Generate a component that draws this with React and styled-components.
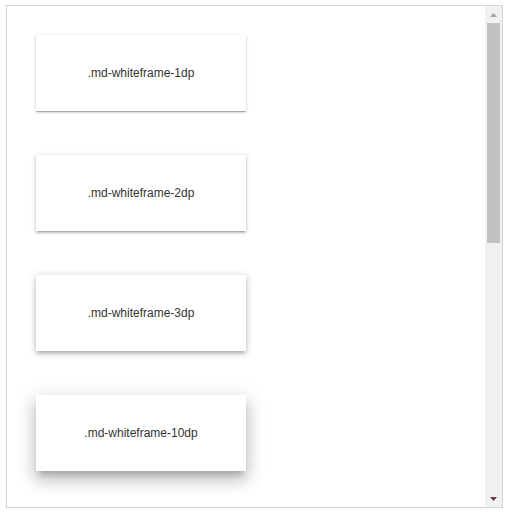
import React from 'react';
import styled, { createGlobalStyle } from 'styled-components';

const GlobalStyle = createGlobalStyle`
  html, body {
    margin: 0;
    padding: 0;
    background: #fff;
    font-family: "Liberation Sans", Arial, sans-serif;
  }
`;

const Frame = styled.div`
  box-sizing: border-box;
  margin: 5px 0 0 6px;
  width: 497px;
  height: 503px;
  border: 1px solid #d4d4d4;
  display: flex;
  overflow: hidden;
`;

const Content = styled.div`
  flex: 1;
  overflow: hidden;
  padding: 29px 0 0 29px;
  display: flex;
  flex-direction: column;
  gap: 44px;
`;

const Card = styled.div`
  flex: none;
  width: 210px;
  height: 76px;
  background: #fff;
  display: flex;
  align-items: center;
  justify-content: center;
  font-size: 12px;
  color: #333;
  box-shadow: ${(p) => p.shadow};
`;

const Scrollbar = styled.div`
  width: 17px;
  flex: none;
  background: #f1f1f1;
  display: flex;
  flex-direction: column;
`;

const ArrowButton = styled.div`
  height: 17px;
  flex: none;
  display: flex;
  align-items: center;
  justify-content: center;
`;

const Track = styled.div`
  flex: 1;
  padding: 0 2px;
`;

const Thumb = styled.div`
  height: 220px;
  background: #c1c1c1;
`;

const shadows = {
  1: '0 1px 3px 0 rgba(0,0,0,.2), 0 1px 1px 0 rgba(0,0,0,.14), 0 2px 1px -1px rgba(0,0,0,.12)',
  2: '0 1px 5px 0 rgba(0,0,0,.2), 0 2px 2px 0 rgba(0,0,0,.14), 0 3px 1px -2px rgba(0,0,0,.12)',
  3: '0 1px 8px 0 rgba(0,0,0,.2), 0 3px 4px 0 rgba(0,0,0,.14), 0 3px 3px -2px rgba(0,0,0,.12)',
  10: '0 6px 6px -3px rgba(0,0,0,.2), 0 10px 14px 1px rgba(0,0,0,.14), 0 4px 18px 3px rgba(0,0,0,.12)',
};

// only the frames that are visible in the scrolled view
const levels = [1, 2, 3, 10];

function Arrow({ up, color }) {
  return (
    <svg width="7" height="4" viewBox="0 0 7 4">
      {up ? (
        <polygon points="3.5,0 7,4 0,4" fill={color} />
      ) : (
        <polygon points="0,0 7,0 3.5,4" fill={color} />
      )}
    </svg>
  );
}

export default function App() {
  return (
    <>
      <GlobalStyle />
      <Frame>
        <Content>
          {levels.map((dp) => (
            <Card key={dp} shadow={shadows[dp]}>
              .md-whiteframe-{dp}dp
            </Card>
          ))}
        </Content>
        <Scrollbar>
          <ArrowButton>
            <Arrow up color="#a3a3a3" />
          </ArrowButton>
          <Track>
            <Thumb />
          </Track>
          <ArrowButton>
            <Arrow color="#6b3a3e" />
          </ArrowButton>
        </Scrollbar>
      </Frame>
    </>
  );
}
